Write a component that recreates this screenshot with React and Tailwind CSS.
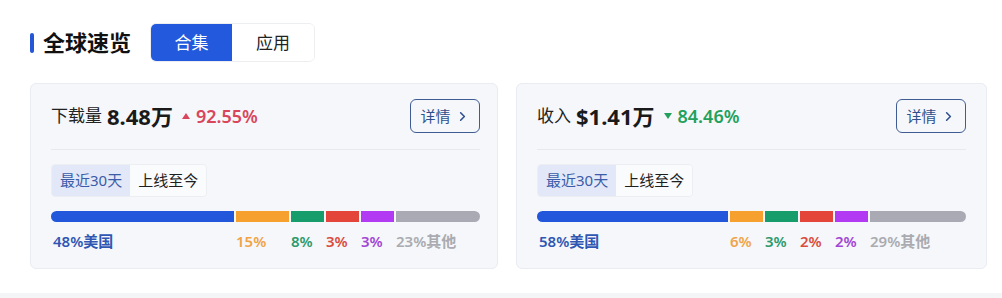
import { ChevronRight } from "lucide-react";

const cards = [
  {
    label: "下载量",
    value: "8.48万",
    change: "92.55%",
    up: true,
    segments: [
      { w: 183, bar: "bg-[#2357db]", text: "text-[#2f56b3]", label: "48%美国" },
      { w: 53, bar: "bg-[#f5a02f]", text: "text-[#f0a448]", label: "15%" },
      { w: 33, bar: "bg-[#169d6b]", text: "text-[#2d9a6b]", label: "8%" },
      { w: 33, bar: "bg-[#e3453a]", text: "text-[#d94d3f]", label: "3%" },
      { w: 33, bar: "bg-[#b13af2]", text: "text-[#a346d4]", label: "3%" },
      { w: 84, bar: "bg-[#a9aab4]", text: "text-[#aaabb0]", label: "23%其他" },
    ],
  },
  {
    label: "收入",
    value: "$1.41万",
    change: "84.46%",
    up: false,
    segments: [
      { w: 191, bar: "bg-[#2357db]", text: "text-[#2f56b3]", label: "58%美国" },
      { w: 33, bar: "bg-[#f5a02f]", text: "text-[#f0a448]", label: "6%" },
      { w: 33, bar: "bg-[#169d6b]", text: "text-[#2d9a6b]", label: "3%" },
      { w: 33, bar: "bg-[#e3453a]", text: "text-[#d94d3f]", label: "2%" },
      { w: 33, bar: "bg-[#b13af2]", text: "text-[#a346d4]", label: "2%" },
      { w: 96, bar: "bg-[#a9aab4]", text: "text-[#aaabb0]", label: "29%其他" },
    ],
  },
];

function StatCard({ card, box }) {
  return (
    <div
      className={`${box} h-[186px] bg-[#f5f7fa] border border-[#e9ecf1] rounded-md pl-[20px] pt-[15px]`}
    >
      {/* Header */}
      <div className="flex items-center justify-between h-[34px]">
        <div className="flex items-center">
          <span className="text-[17px] text-[#222]">{card.label}</span>
          <span className="ml-[5px] text-[22px] font-bold text-[#1a1a1a]">
            {card.value}
          </span>
          {card.up ? (
            <span className="ml-[9px] w-0 h-0 border-x-[4px] border-x-transparent border-b-[6px] border-b-[#d9465c]" />
          ) : (
            <span className="ml-[9px] w-0 h-0 border-x-[4px] border-x-transparent border-t-[6px] border-t-[#23a05c]" />
          )}
          <span
            className={`ml-[6px] text-[18px] font-semibold ${
              card.up ? "text-[#d9465c]" : "text-[#23a05c]"
            }`}
          >
            {card.change}
          </span>
        </div>
        <button className="w-[70px] h-[34px] border border-[#3f5d93] rounded-md flex items-center justify-center gap-[4px] text-[15px] text-[#2e4f8c]">
          详情
          <ChevronRight className="w-[15px] h-[15px]" strokeWidth={2.5} />
        </button>
      </div>

      <div className="mt-[16px] border-t border-[#e6e9ee]" />

      {/* Range switch */}
      <div className="mt-[14px] inline-flex h-[33px] rounded border border-[#eceef2] overflow-hidden text-[15px]">
        <div className="px-[8px] flex items-center bg-[#e2e8f7] text-[#3b5ca9]">
          最近30天
        </div>
        <div className="px-[8px] flex items-center bg-[#fafbfc] text-[#1f1f1f]">
          上线至今
        </div>
      </div>

      {/* Distribution bar */}
      <div className="mt-[14px] flex gap-[2px] h-[11px] rounded-full overflow-hidden">
        {card.segments.map((s, i) => (
          <div key={i} className={`${s.bar} shrink-0`} style={{ width: s.w }} />
        ))}
      </div>
      <div className="mt-[9px] flex gap-[2px] text-[15px] font-semibold leading-[20px]">
        {card.segments.map((s, i) => (
          <div
            key={i}
            className={`${s.text} shrink-0 whitespace-nowrap ${i === 0 ? "pl-[2px]" : ""}`}
            style={{ width: s.w }}
          >
            {s.label}
          </div>
        ))}
      </div>
    </div>
  );
}

export default function App() {
  return (
    <div
      className="w-[1002px] h-[298px] bg-white overflow-hidden"
      style={{ fontFamily: '"Noto Sans", "Noto Sans CJK SC", sans-serif' }}
    >
      {/* Title row */}
      <div className="flex items-center pl-[30px] pt-[23px] h-[62px]">
        <div className="w-[4px] h-[20px] bg-[#2456d6] rounded-sm" />
        <h2 className="ml-[9px] text-[22px] font-bold text-[#111]">全球速览</h2>
        <div className="ml-[19px] flex h-[39px] border border-[#eceef2] rounded-md overflow-hidden text-[17px]">
          <div className="w-[81px] flex items-center justify-center bg-[#2359dc] text-white">
            合集
          </div>
          <div className="w-[82px] flex items-center justify-center bg-white text-[#222]">
            应用
          </div>
        </div>
      </div>

      {/* Cards */}
      <div className="flex gap-[18px] pl-[30px] mt-[21px]">
        <StatCard card={cards[0]} box="w-[468px] pr-[17px]" />
        <StatCard card={cards[1]} box="w-[471px] pr-[20px]" />
      </div>

      <div className="mt-[24px] h-[6px] bg-[#f4f5f7]" />
    </div>
  );
}
